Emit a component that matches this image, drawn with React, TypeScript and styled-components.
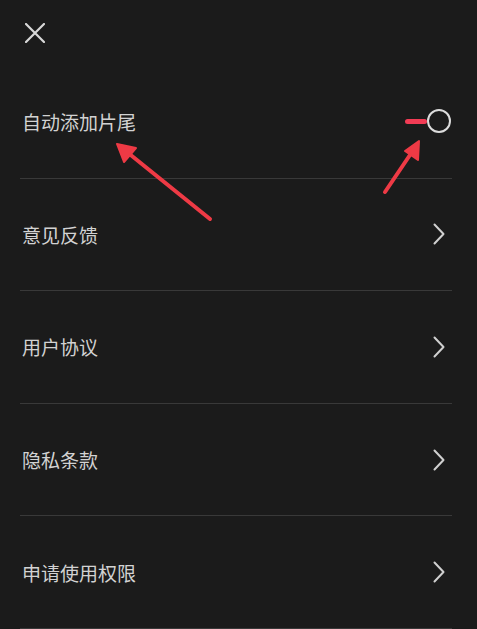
import React from "react";
import styled, { createGlobalStyle } from "styled-components";

const Global = createGlobalStyle`
  html, body { margin: 0; padding: 0; background: #1b1b1b; }
  body { font-family: "Noto Sans CJK SC", "Noto Sans", sans-serif; }
`;

const Page = styled.div`
  position: relative;
  width: 477px;
  height: 629px;
  overflow: hidden;
  background: #1b1b1b;
  box-sizing: border-box;
`;

const Header = styled.div`
  height: 66px;
  display: flex;
  align-items: flex-start;
  padding: 23px 0 0 25px;
  box-sizing: border-box;
`;

const CloseButton = styled.button`
  width: 20px;
  height: 20px;
  padding: 0;
  border: 0;
  background: transparent;
  display: flex;
`;

const List = styled.div`
  display: flex;
  flex-direction: column;
  padding: 0 25px 0 20px;
`;

const Row = styled.div`
  height: 112.6px;
  box-sizing: border-box;
  padding-top: 0;
  display: flex;
  align-items: center;
  justify-content: space-between;
  border-bottom: 1px solid #393939;
  padding-left: 2px;
`;

const Label = styled.span`
  font-size: 19px;
  color: #d2d2d2;
  line-height: 1;
`;

const Chevron = styled.svg`
  width: 12px;
  height: 22px;
  margin-right: 7px;
`;

const Toggle = styled.div`
  display: flex;
  align-items: center;
  margin-right: 1px;
  margin-top: -1px;
`;

const Track = styled.div`
  width: 22px;
  height: 5px;
  border-radius: 3px;
  background: #f23c55;
`;

const Knob = styled.div`
  width: 20px;
  height: 20px;
  border-radius: 50%;
  border: 2px solid #dcdcdc;
  background: #1b1b1b;
`;

const Overlay = styled.svg`
  position: absolute;
  left: 0;
  top: 0;
  pointer-events: none;
`;

const items = ["意见反馈", "用户协议", "隐私条款", "申请使用权限"];

export default function App() {
  return (
    <Page>
      <Global />
      <Header>
        <CloseButton aria-label="close">
          <svg width="20" height="20" viewBox="0 0 20 20">
            <path d="M1 1 L19 19 M19 1 L1 19" stroke="#d8d8d8" strokeWidth="2.2" strokeLinecap="round" />
          </svg>
        </CloseButton>
      </Header>
      <List>
        <Row>
          <Label>自动添加片尾</Label>
          <Toggle>
            <Track />
            <Knob />
          </Toggle>
        </Row>
        {items.map((t) => (
          <Row key={t}>
            <Label>{t}</Label>
            <Chevron viewBox="0 0 12 22">
              <path d="M1.5 1.5 L10.5 11 L1.5 20.5" fill="none" stroke="#d0d0d0" strokeWidth="2" strokeLinecap="round" strokeLinejoin="round" />
            </Chevron>
          </Row>
        ))}
      </List>
      <Overlay width="477" height="629" viewBox="0 0 477 629">
        <g stroke="#ee3a45" strokeWidth="4" strokeLinecap="round" fill="#ee3a45">
          <line x1="210" y1="219" x2="127" y2="152" />
          <polygon points="117,144 136,148 124,162" strokeWidth="2" strokeLinejoin="round" />
          <line x1="385" y1="192" x2="412" y2="152" />
          <polygon points="419,141 418,160 405,151" strokeWidth="2" strokeLinejoin="round" />
        </g>
      </Overlay>
    </Page>
  );
}
